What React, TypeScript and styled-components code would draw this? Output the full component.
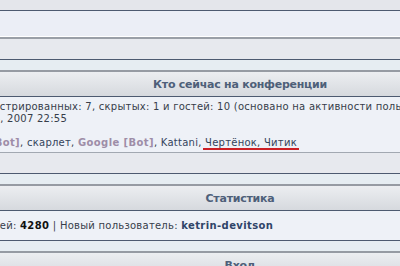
import React from "react";
import styled, { createGlobalStyle } from "styled-components";

const Global = createGlobalStyle`
  html, body { margin: 0; padding: 0; background: #e6edf2; }
  body { font-family: "DejaVu Sans", Verdana, sans-serif; }
`;

const Viewport = styled.div`
  width: 400px;
  height: 266px;
  overflow: hidden;
  background: #e6edf2;
`;

const Sheet = styled.div`
  width: 1114px;
  margin-left: -317px;
  display: flex;
  flex-direction: column;
  gap: 10px;
`;

const Panel = styled.section`
  display: flex;
  flex-direction: column;
  border-bottom: 1px solid #4d5a70;
`;

const Header = styled.h2`
  margin: 0;
  height: 24px;
  border-top: 2px solid #969ba3;
  border-bottom: 1px solid #4d5a70;
  background: linear-gradient(#eceef1, #d6d9de);
  display: flex;
  align-items: center;
  justify-content: center;
  font: bold 11px/1 "DejaVu Sans", Verdana, sans-serif;
  letter-spacing: -0.25px;
  color: #4e5f79;
`;

const Strip = styled.div<{ $h: number; $bg: string; $edge?: "dark" | "soft" }>`
  height: ${(p) => p.$h}px;
  background: ${(p) => p.$bg};
  border-bottom: ${(p) =>
    p.$edge === "dark" ? "1px solid #4d5a70" : p.$edge === "soft" ? "2px solid #9a9fa7" : "none"};
  box-shadow: ${(p) => (p.$edge === "soft" ? "inset 0 -1px 0 #ffffff" : "none")};
`;

const Body = styled.div<{ $pad: string; $divider?: boolean }>`
  background: #eef1f7;
  padding: ${(p) => p.$pad};
  padding-left: 6px;
  font: 10px/12px "DejaVu Sans", Verdana, sans-serif;
  letter-spacing: 0.25px;
  color: #363d4a;
  white-space: nowrap;
  border-bottom: ${(p) => (p.$divider ? "1px solid #a2a8b1" : "none")};

  b {
    letter-spacing: 0.4px;
  }
`;

const Foot = styled.div`
  height: 20px;
  background: #e7e9ee;
`;

const Bot = styled.b`
  color: #9e8da7;
`;

const User = styled.span`
  color: #34445c;
`;

const Marked = styled.span`
  border-bottom: 2px solid #cc1f25;
  padding: 0 2px 0 2px;
  margin: 0 -2px 0 -2px;
`;

const Num = styled.b`
  color: #111;
`;

const Newest = styled.b`
  color: #2f4468;
`;

export default function App() {
  return (
    <>
      <Global />
      <Viewport>
        <Sheet>
          <Panel>
            <Strip $h={10} $bg="#e4e6eb" $edge="dark" />
            <Strip $h={26} $bg="#ebeef6" $edge="soft" />
            <Foot />
          </Panel>

          <Panel>
            <Header>Кто сейчас на конференции</Header>
            <Body $pad="4px 0 3px" $divider>
              Сейчас посетителей на конференции: 18, из них зарегистрированных: 7, скрытых: 1 и гостей: 10
              (основано на активности пользователей за последние 5 минут)
              <br />
              Больше всего посетителей (1137) здесь было Пт мар 16, 2007 22:55
              <br />
              <br />
              Зарегистрированные пользователи: <User>Мариша</User>, <Bot>Google [Bot]</Bot>,{" "}
              <User>скарлет</User>, <Bot>Google [Bot]</Bot>, <User>Kattani</User>,{" "}
              <Marked>
                <User>Чертёнок</User>, <User>Читик</User>
              </Marked>
            </Body>
            <Foot />
          </Panel>

          <Panel>
            <Header>Статистика</Header>
            <Body $pad="9px 0 8px">
              Сообщений: <Num>876543</Num> | Тем: <Num>234567</Num> | Всего пользователей: <Num>4280</Num> |
              Новый пользователь: <Newest>ketrin-devitson</Newest>
            </Body>
          </Panel>

          <Panel>
            <Header>Вход</Header>
            <Body $pad="9px 0 8px">&nbsp;</Body>
          </Panel>
        </Sheet>
      </Viewport>
    </>
  );
}
